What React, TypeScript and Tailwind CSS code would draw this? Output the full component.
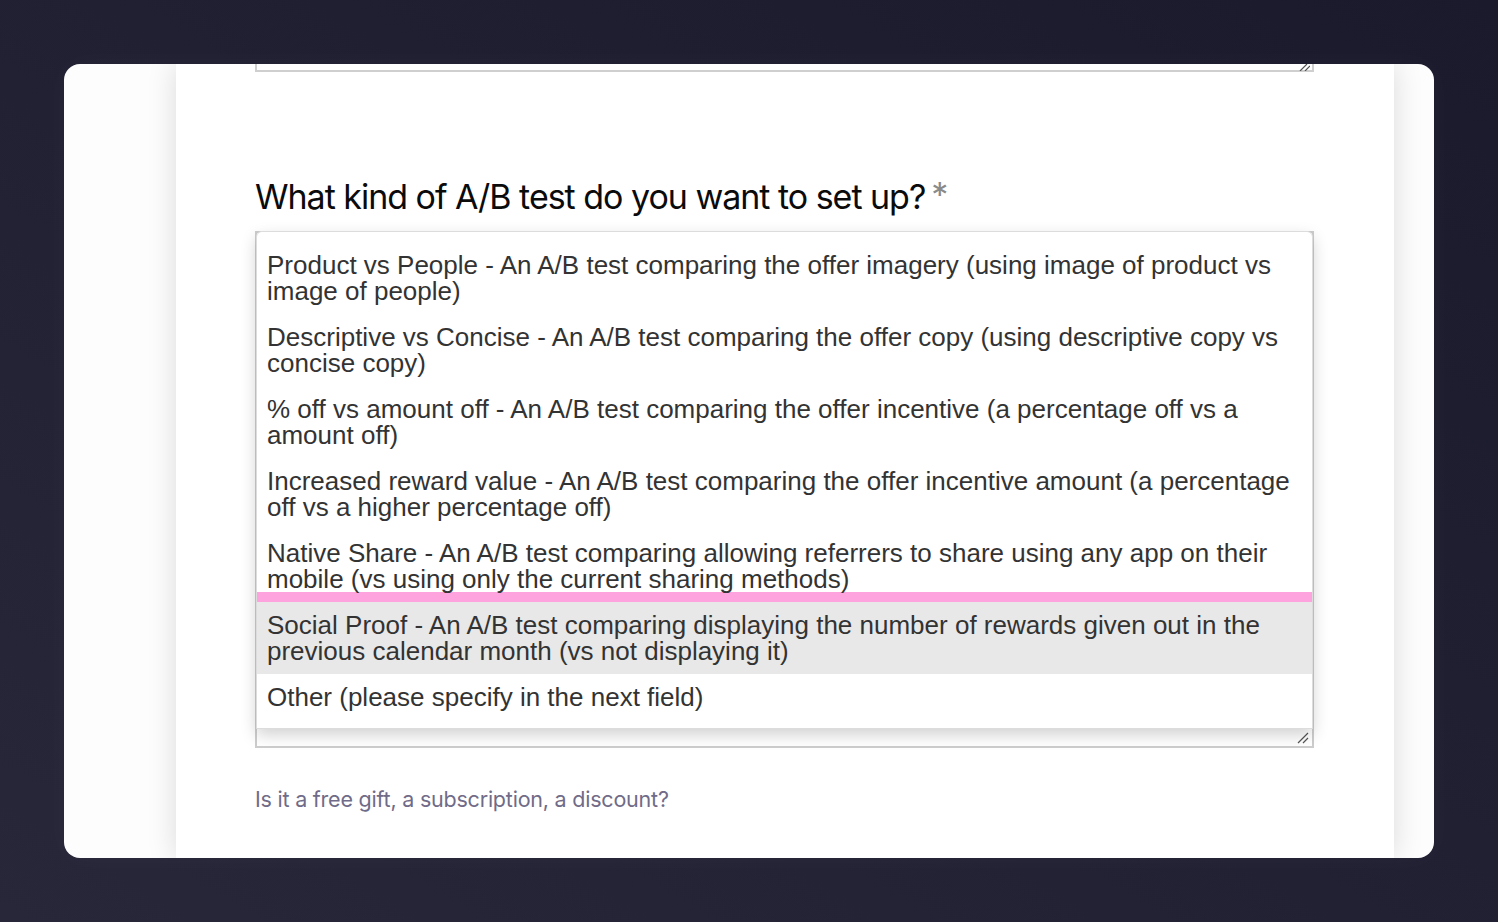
import React from 'react'

const options = [
  'Product vs People - An A/B test comparing the offer imagery (using image of product vs image of people)',
  'Descriptive vs Concise - An A/B test comparing the offer copy (using descriptive copy vs concise copy)',
  '% off vs amount off - An A/B test comparing the offer incentive (a percentage off vs a amount off)',
  'Increased reward value - An A/B test comparing the offer incentive amount (a percentage off vs a higher percentage off)',
  'Native Share - An A/B test comparing allowing referrers to share using any app on their mobile (vs using only the current sharing methods)',
  'Social Proof - An A/B test comparing displaying the number of rewards given out in the previous calendar month (vs not displaying it)',
  'Other (please specify in the next field)',
]

const ResizeHandle: React.FC = () => (
  <svg className="absolute bottom-[2px] right-[3px]" width="14" height="12" viewBox="0 0 14 12">
    <path d="M3 11 L13 1 M8 11 L13 6" stroke="#555" strokeWidth="1.2" fill="none" />
  </svg>
)

const App: React.FC = () => {
  return (
    <div className="min-h-[922px] w-full bg-linear-to-tr from-[#272739] to-[#1b1a2d] p-16">
      <div className="flex h-[794px] w-[1370px] overflow-hidden rounded-2xl bg-[#fdfdfd] pl-[112px] shadow-[0_0_30px_rgba(255,255,255,0.03)]">
        {/* Form column */}
        <div className="flex w-[1218px] flex-col bg-white pl-[79px] pr-[80px] shadow-[0_0_28px_rgba(0,0,0,0.14)]">
          {/* previous textarea, mostly scrolled out */}
          <div className="relative h-[8px] w-full border-x-2 border-b-2 border-[#cfcfcf]">
            <svg className="absolute -bottom-[1px] right-[2px]" width="14" height="8" viewBox="0 0 14 8">
              <path d="M4 8 L11 1 M9 8 L14 3" stroke="#555" strokeWidth="1.2" fill="none" />
            </svg>
          </div>

          <h2
            className="mt-[105px] text-[34px] leading-[40px] tracking-[-0.03em] text-[#0b0b0b]"
            style={{ fontFamily: 'Inter, "Noto Sans", sans-serif' }}
          >
            What kind of A/B test do you want to set up?
            <span className="relative -top-[2px] ml-[6px] text-[#8a8a8a]">*</span>
          </h2>

          {/* select with open list */}
          <div className="relative mt-[14px] h-[517px] w-full border-2 border-[#cdcdcd]">
            <ResizeHandle />
            <ul
              className="absolute -left-px -right-px -top-[2px] rounded-t-md border border-[#dcdcdc] bg-white pb-2 pt-2.5 shadow-[0_6px_16px_rgba(0,0,0,0.18)]"
              style={{ fontFamily: '"Liberation Sans", Arial, sans-serif' }}
            >
              {options.map((o, i) => (
                <li key={i}>
                  <div
                    className={`px-[10px] text-[26px] leading-[26px] text-[#333333] ${
                      i === 4 ? 'pt-2.5' : 'py-2.5'
                    } ${i === 5 ? 'bg-[#e8e8e8]' : ''}`}
                  >
                    {o}
                  </div>
                  {i === 4 && <div className="h-2.5 bg-[#ffa3de]" />}
                </li>
              ))}
            </ul>
          </div>

          <p
            className="mt-[38px] text-[21.5px] leading-[26px] tracking-[-0.01em] text-[#6f6b88]"
            style={{ fontFamily: 'Inter, "Noto Sans", sans-serif' }}
          >
            Is it a free gift, a subscription, a discount?
          </p>
        </div>
      </div>
    </div>
  )
}

export default App
